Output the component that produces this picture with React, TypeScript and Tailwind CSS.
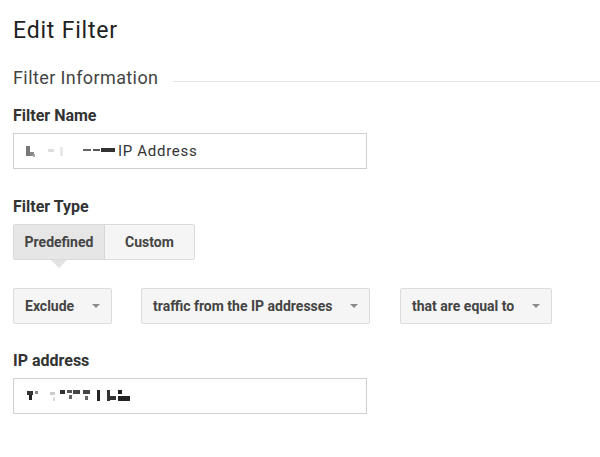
import { ReactNode } from 'react';

const FONT = { fontFamily: 'Roboto, "Liberation Sans", Arial, sans-serif' };

function Caret() {
  return <span className="w-0 h-0 border-l-[4.5px] border-r-[4.5px] border-t-[4px] border-l-transparent border-r-transparent border-t-[#8a8a8a]" />;
}

function Dropdown({ label, width }: { label: string; width: string }) {
  return (
    <div className={`${width} h-[36px] flex items-center justify-between pl-[11px] pr-[11px] bg-[#f5f5f5] border border-[#dcdcdc] rounded-[2px]`}>
      <span className="text-[14px] font-bold text-[#444]">{label}</span>
      <Caret />
    </div>
  );
}

function Label({ children, className }: { children: ReactNode; className: string }) {
  return <div className={`text-[16px] leading-[20px] font-bold text-[#333] ${className}`}>{children}</div>;
}

type Blot = [number, number, number, number, string];

// pixelated, redacted parts of the field values
const NAME_BLOTS: Blot[] = [
  [0, 2, 4, 10, '#777'],
  [4, 8, 4, 4, '#888'],
  [7, 10, 2, 3, '#aaa'],
  [22, 5, 6, 3, '#ddd'],
  [34, 3, 3, 9, '#e8e8e8'],
  [57, 5, 8, 2, '#666'],
  [67, 5, 7, 2, '#555'],
  [75, 4, 14, 4, '#333'],
];

const IP_BLOTS: Blot[] = [
  [0, 2, 6, 4, '#333'],
  [2, 6, 3, 5, '#222'],
  [8, 2, 3, 3, '#888'],
  [23, 3, 5, 3, '#ccc'],
  [26, 8, 2, 4, '#ddd'],
  [33, 1, 5, 4, '#333'],
  [40, 1, 5, 3, '#555'],
  [42, 6, 3, 4, '#666'],
  [46, 1, 7, 4, '#444'],
  [56, 1, 7, 4, '#444'],
  [58, 7, 3, 4, '#666'],
  [70, 1, 3, 11, '#222'],
  [80, 1, 3, 11, '#333'],
  [83, 7, 6, 4, '#333'],
  [91, 1, 4, 4, '#222'],
  [91, 7, 12, 5, '#222'],
];

function Redacted({ blots, width, id }: { blots: Blot[]; width: number; id: string }) {
  return (
    <svg width={width} height={14} className="shrink-0">
      <filter id={id}>
        <feGaussianBlur stdDeviation="0.45" />
      </filter>
      <g filter={`url(#${id})`}>
        {blots.map(([x, y, w, h, c], i) => (
          <rect key={i} x={x} y={y} width={w} height={h} fill={c} />
        ))}
      </g>
    </svg>
  );
}

export default function App() {
  return (
    <div className="w-[600px] h-[457px] bg-white px-[13px] overflow-hidden" style={FONT}>
      <h1 className="mt-[17px] text-[23px] leading-[28px] tracking-[0.8px] text-[#212121]">Edit Filter</h1>

      {/* Section header */}
      <div className="mt-[21px] flex items-start gap-[15px] -mr-[13px]">
        <span className="text-[18px] leading-[24px] tracking-[0.4px] text-[#444] whitespace-nowrap">Filter Information</span>
        <div className="flex-1 mt-[15px] h-px bg-[#e3e3e3]" />
      </div>

      <Label className="mt-[16px]">Filter Name</Label>
      <div className="mt-[7px] w-[354px] h-[36px] border border-[#d0d0d0] flex items-center pl-[12px] text-[15px] tracking-[0.7px] text-[#333]">
        <Redacted blots={NAME_BLOTS} width={92} id="blur-name" />
        <span>IP Address</span>
      </div>

      <Label className="mt-[28px]">Filter Type</Label>
      <div className="mt-[7px] flex">
        <div className="relative flex border border-[#dadada] rounded-[2px]">
          <div className="relative w-[91px] h-[34px] flex items-center justify-center bg-[#e6e6e6] border-r border-[#d6d6d6] text-[14px] font-bold text-[#444]">
            Predefined
            <span className="absolute left-[37px] top-[35px] w-0 h-0 border-l-[8px] border-r-[8px] border-t-[8px] border-l-transparent border-r-transparent border-t-[#e2e2e2]" />
          </div>
          <div className="w-[89px] h-[34px] flex items-center justify-center bg-[#f5f5f5] text-[14px] font-bold text-[#444]">
            Custom
          </div>
        </div>
      </div>

      <div className="mt-[28px] flex">
        <Dropdown label="Exclude" width="w-[99px]" />
        <div className="w-[29px]" />
        <Dropdown label="traffic from the IP addresses" width="w-[229px]" />
        <div className="w-[30px]" />
        <Dropdown label="that are equal to" width="w-[152px]" />
      </div>

      <Label className="mt-[27px]">IP address</Label>
      <div className="mt-[7px] w-[354px] h-[36px] border border-[#d0d0d0] flex items-center pl-[13px]">
        <Redacted blots={IP_BLOTS} width={104} id="blur-ip" />
      </div>
    </div>
  );
}
